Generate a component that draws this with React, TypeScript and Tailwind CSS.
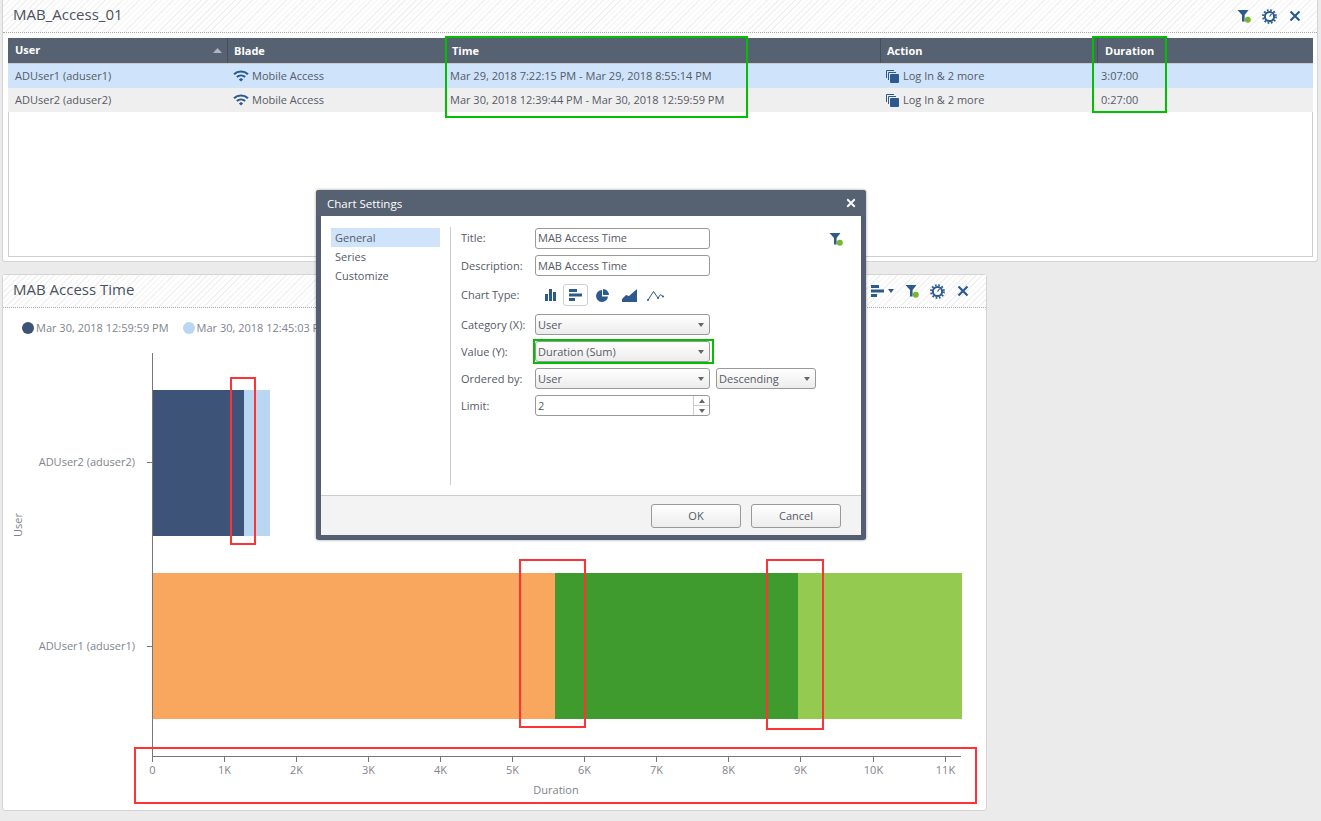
import React from 'react';

const hatch = 'bg-[repeating-linear-gradient(135deg,#f1f1f1_0,#f1f1f1_1px,#ffffff_1px,#ffffff_4px)]';
const blue = '#2c5a8f';

const rows = [
  { user: 'ADUser1 (aduser1)', time: 'Mar 29, 2018 7:22:15 PM - Mar 29, 2018 8:55:14 PM', duration: '3:07:00', bg: 'bg-[#cfe4fb]' },
  { user: 'ADUser2 (aduser2)', time: 'Mar 30, 2018 12:39:44 PM - Mar 30, 2018 12:59:59 PM', duration: '0:27:00', bg: 'bg-[#efefef]' },
];

const ticks = ['0', '1K', '2K', '3K', '4K', '5K', '6K', '7K', '8K', '9K', '10K', '11K'];
const tickX = [152, 224, 296, 368, 440, 512, 584, 656, 728, 800, 873, 945];

const FilterIcon = () => (
  <svg width="15" height="15" viewBox="0 0 15 15" className="block">
    <path d="M0.5 1h11L7.6 6v6.5H5V6z" fill={blue} />
    <circle cx="10.8" cy="10.8" r="3" fill="#76b82a" />
  </svg>
);

const GearIcon = () => (
  <svg width="15" height="15" viewBox="0 0 15 15" className="-ml-px mr-px block">
    <circle cx="7.5" cy="7.5" r="4.6" fill="none" stroke={blue} strokeWidth="2" />
    <circle cx="7.5" cy="7.5" r="6.4" fill="none" stroke={blue} strokeWidth="2" strokeDasharray="1.7 1.65" />
    <path d="M7.5 7.5L9.6 4.8" stroke={blue} strokeWidth="1.2" />
  </svg>
);

const CloseIcon = ({ color = blue, size = 12 }: { color?: string; size?: number }) => (
  <svg width={size} height={size} viewBox="0 0 12 12" className="block">
    <path d="M1.5 1.5l9 9M10.5 1.5l-9 9" stroke={color} strokeWidth="2.2" />
  </svg>
);

const WifiIcon = () => (
  <svg width="16" height="12" viewBox="0 0 16 12" className="block">
    <path d="M1 4.2C5 .6 11 .6 15 4.2" fill="none" stroke={blue} strokeWidth="2.2" />
    <path d="M3.8 7C6.2 4.9 9.8 4.9 12.2 7" fill="none" stroke={blue} strokeWidth="2" />
    <path d="M5.8 9.4L8 8l2.2 1.4L8 11.6z" fill={blue} />
  </svg>
);

const CopyIcon = () => (
  <svg width="13" height="13" viewBox="0 0 13 13" className="block">
    <path d="M.5 8V.5H8M2.5 10V2.5H10" fill="none" stroke={blue} strokeWidth="1" />
    <rect x="4" y="4" width="9" height="9" rx="1" fill={blue} />
  </svg>
);

const HBarsIcon = () => (
  <svg width="13" height="12" viewBox="0 0 13 12" className="block">
    <path d="M0 0h8v3H0zM0 4.5h13v3H0zM0 9h6v3H0z" fill={blue} />
  </svg>
);

const Caret = ({ color = '#666666' }: { color?: string }) => (
  <svg width="6" height="4" viewBox="0 0 6 4" className="block">
    <path d="M0 0h6L3 4z" fill={color} />
  </svg>
);

const Select = ({ value, className }: { value: string; className: string }) => (
  <div className={`flex h-[21px] items-center justify-between rounded-[3px] border border-[#999999] bg-gradient-to-b from-[#ffffff] to-[#ececec] pl-[2px] pr-[5px] ${className}`}>
    <span className="pt-px">{value}</span>
    <Caret />
  </div>
);

const Input = ({ value, nudge = '' }: { value: string; nudge?: string }) => (
  <div className={`flex h-[21px] w-[175px] items-center rounded-[3px] border border-[#999999] bg-white pl-[2px] ${nudge}`}>{value}</div>
);

const FormRow = ({ label, children, mt, nudge = 'pt-px' }: { label: string; children: React.ReactNode; mt: string; nudge?: string }) => (
  <div className={`flex items-center ${mt}`}>
    <span className={`w-[74px] ${nudge}`}>{label}</span>
    {children}
  </div>
);

const HeaderCell = ({ label, sep = true, sort = false, pad = 'pl-[6px] pt-px' }: { label: string; sep?: boolean; sort?: boolean; pad?: string }) => (
  <div className={`flex h-[25px] items-center justify-between pr-[5px] font-bold text-white ${pad} ${sep ? 'border-r border-[#444f5e]' : ''}`}>
    <span>{label}</span>
    {sort && (
      <svg width="9" height="5" viewBox="0 0 9 5" className="block">
        <path d="M0 5L4.5 0 9 5z" fill="#aeb5bf" />
      </svg>
    )}
  </div>
);

const Box = ({ className }: { className: string }) => (
  <div className={`pointer-events-none absolute border-2 ${className}`} />
);

export default function App() {
  return (
    <div className="relative h-[821px] w-[1321px] overflow-hidden bg-[#ebebeb] font-['Open_Sans',sans-serif] text-[11px] text-[#555a66]">
      {/* Table panel */}
      <div className="ml-[2px] mr-[3px] h-[262px] rounded-b-[3px] border border-t-0 border-[#d4d4d4] bg-white">
        <div className={`flex h-[33px] items-center justify-between border-b border-dotted border-[#aaaaaa] pl-[10px] pr-[16px] ${hatch}`}>
          <span className="-mt-[4px] text-[15px] text-[#4a5260]">MAB_Access_01</span>
          <div className="flex items-center gap-[11px]">
            <FilterIcon />
            <GearIcon />
            <CloseIcon />
          </div>
        </div>
        <div className="ml-[5px] mr-[4px] mt-[5px] h-[219px] border border-t-0 border-[#cfcfcf]">
          <div className="-mx-px grid grid-cols-[220px_218px_435px_217px_1fr] border-b border-[#cccccc] bg-[#566171]">
            <HeaderCell label="User" sort pad="pl-[7px]" />
            <HeaderCell label="Blade" />
            <HeaderCell label="Time" />
            <HeaderCell label="Action" />
            <HeaderCell label="Duration" sep={false} pad="pl-[7px] pt-px" />
          </div>
          {rows.map((r) => (
            <div key={r.user} className={`-mx-px grid h-[24px] grid-cols-[220px_218px_435px_217px_1fr] items-center ${r.bg}`}>
              <span className="pl-[7px]">{r.user}</span>
              <span className="flex items-center gap-[3px] pl-[5px]"><WifiIcon />Mobile Access</span>
              <span className="pl-[4px]">{r.time}</span>
              <span className="flex items-center gap-[4px] pl-[5px]"><CopyIcon />Log In &amp; 2 more</span>
              <span className="pl-[3px]">{r.duration}</span>
            </div>
          ))}
        </div>
      </div>

      {/* Chart panel */}
      <div className="ml-[2px] mt-[12px] h-[537px] w-[985px] rounded-[3px] border border-[#d4d4d4] bg-white">
        <div className={`flex h-[33px] items-center justify-between border-b border-dotted border-[#aaaaaa] pl-[10px] pr-[17px] ${hatch}`}>
          <span className="-mt-[4px] text-[15px] text-[#4a5260]">MAB Access Time</span>
          <div className="flex items-center gap-[11px]">
            <div className="flex items-center gap-[4px]">
              <HBarsIcon />
              <Caret color={blue} />
            </div>
            <FilterIcon />
            <GearIcon />
            <CloseIcon />
          </div>
        </div>
        <div className="flex h-[45px] items-start gap-[14px] pl-[19px] pt-[12px] text-[#80848e]">
          <span className="flex items-center gap-[2px]"><span className="h-[12px] w-[12px] rounded-full bg-[#3d5478]" />Mar 30, 2018 12:59:59 PM</span>
          <span className="flex items-center gap-[2px]"><span className="h-[12px] w-[12px] rounded-full bg-[#b9d6f2]" />Mar 30, 2018 12:45:03 PM</span>
        </div>
        <svg width="983" height="458" viewBox="3 353 983 458" className="block font-['Open_Sans',sans-serif]">
          <rect x="153" y="390" width="91" height="146" fill="#3d5478" />
          <rect x="244" y="390" width="26" height="146" fill="#b9d6f2" />
          <rect x="153" y="573" width="402" height="146" fill="#f9a65e" />
          <rect x="555" y="573" width="243" height="146" fill="#3f9b2e" />
          <rect x="798" y="573" width="164" height="146" fill="#94ca50" />
          <path d="M152.5 353V756.5H961" fill="none" stroke="#777777" />
          <path d="M147 462.5h5M147 646.5h5" stroke="#777777" />
          {tickX.map((x, i) => (
            <g key={ticks[i]}>
              <path d={`M${x + 0.5} 756v6`} stroke="#777777" />
              <text x={x + 0.5} y="774" textAnchor="middle" fontSize="11" fill="#80848e">{ticks[i]}</text>
            </g>
          ))}
          <text x="556" y="794" textAnchor="middle" fontSize="11" fill="#80848e">Duration</text>
          <text x="135" y="466" textAnchor="end" fontSize="11" fill="#80848e">ADUser2 (aduser2)</text>
          <text x="135" y="650" textAnchor="end" fontSize="11" fill="#80848e">ADUser1 (aduser1)</text>
          <text x="22" y="525" textAnchor="middle" fontSize="11" fill="#80848e" transform="rotate(-90 22 525)">User</text>
        </svg>
      </div>

      {/* Chart Settings dialog */}
      <div className="absolute left-[316px] top-[190px] flex h-[350px] w-[550px] flex-col rounded-[3px] border-x-[5px] border-b-[5px] border-[#535f70] bg-white shadow-[0_0_3px_rgba(0,0,0,0.4)]">
        <div className="-mx-[5px] flex h-[26px] items-center justify-between rounded-t-[3px] bg-[#566171] pl-[11px] pr-[10px] text-white">
          <span className="mt-px text-[11.5px]">Chart Settings</span>
          <CloseIcon color="#ffffff" size={10} />
        </div>
        <div className="flex flex-1 pl-[10px] pt-[11px]">
          <div className="mt-px w-[109px]">
            <div className="flex h-[19px] items-center bg-[#cfe4fb] pl-[4px] pt-px">General</div>
            <div className="flex h-[19px] items-center pl-[4px] pt-px">Series</div>
            <div className="flex h-[19px] items-center pl-[4px] pt-px">Customize</div>
          </div>
          <div className="ml-[10px] h-[258px] border-l border-[#cccccc]" />
          <div className="relative ml-[10px] flex-1 pt-px">
            <FormRow label="Title:" mt="mt-0" nudge=""><Input value="MAB Access Time" /></FormRow>
            <FormRow label="Description:" mt="mt-[6px]"><Input value="MAB Access Time" nudge="pt-px" /></FormRow>
            <FormRow label="Chart Type:" mt="mt-[8px]">
              <div className="flex items-center">
                <div className="flex h-[21px] w-[28px] items-center justify-center pl-[2px]">
                  <svg width="11" height="12" viewBox="0 0 11 12" className="block"><path d="M0 5h3v7H0zM4 0h3v12H4zM8 3h3v9H8z" fill={blue} /></svg>
                </div>
                <div className="flex h-[22px] w-[25px] items-center justify-center rounded-[3px] border border-[#c8d0da]"><HBarsIcon /></div>
                <div className="flex h-[21px] w-[28px] items-center justify-center">
                  <svg width="13" height="13" viewBox="0 0 13 13" className="block"><path d="M6 1a6 6 0 1 0 6 6.5H6zM7 0v6h6a6 6 0 0 0-6-6z" fill={blue} /></svg>
                </div>
                <div className="flex h-[21px] w-[26px] items-center justify-center">
                  <svg width="15" height="13" viewBox="0 0 15 13" className="block"><path d="M0 13V10l4-4 3 1 8-7v13z" fill={blue} /></svg>
                </div>
                <div className="flex h-[21px] w-[26px] items-center justify-center">
                  <svg width="17" height="11" viewBox="0 0 17 11" className="block">
                    <path d="M1 10L6.5 1.5 11 8l2.5-3.5L16 6.5" fill="none" stroke={blue} strokeWidth="1" />
                    <circle cx="1" cy="10" r="1" fill={blue} />
                    <circle cx="11" cy="8" r="1" fill={blue} />
                    <circle cx="16" cy="6.5" r="1" fill={blue} />
                  </svg>
                </div>
              </div>
            </FormRow>
            <FormRow label="Category (X):" mt="mt-[8px]"><Select value="User" className="w-[175px]" /></FormRow>
            <FormRow label="Value (Y):" mt="mt-[6px]"><Select value="Duration (Sum)" className="w-[175px]" /></FormRow>
            <FormRow label="Ordered by:" mt="mt-[6px]">
              <Select value="User" className="w-[175px]" />
              <Select value="Descending" className="ml-[6px] w-[100px]" />
            </FormRow>
            <FormRow label="Limit:" mt="mt-[6px]">
              <div className="flex h-[21px] w-[175px] items-stretch rounded-[3px] border border-[#999999] bg-white pl-[2px]">
                <span className="flex-1 self-center pt-px">2</span>
                <div className="flex w-[16px] flex-col border-l border-[#cccccc]">
                  <div className="flex flex-1 items-center justify-center border-b border-[#cccccc]">
                    <svg width="6" height="4" viewBox="0 0 6 4" className="block"><path d="M0 4h6L3 0z" fill="#666666" /></svg>
                  </div>
                  <div className="flex flex-1 items-center justify-center"><Caret /></div>
                </div>
              </div>
            </FormRow>
            <div className="absolute right-[17px] top-[5px]"><FilterIcon /></div>
          </div>
        </div>
        <div className="flex h-[40px] items-center justify-end gap-[10px] border-t border-[#cccccc] bg-[#f3f3f3] pr-[20px]">
          <div className="flex h-[24px] w-[90px] items-center justify-center rounded-[3px] border border-[#999999] bg-gradient-to-b from-[#ffffff] to-[#ececec] pt-px">OK</div>
          <div className="flex h-[24px] w-[90px] items-center justify-center rounded-[3px] border border-[#999999] bg-gradient-to-b from-[#ffffff] to-[#ececec] pt-px">Cancel</div>
        </div>
      </div>

      {/* Green and red annotations drawn over the screenshot */}
      <Box className="left-[445px] top-[36px] h-[82px] w-[303px] border-[#00c000]" />
      <Box className="left-[1092px] top-[36px] h-[77px] w-[75px] border-[#00c000]" />
      <Box className="left-[533px] top-[339px] h-[25px] w-[181px] border-[#00c000]" />
      <Box className="left-[230px] top-[377px] h-[168px] w-[26px] border-[#ff3333]" />
      <Box className="left-[519px] top-[559px] h-[169px] w-[67px] border-[#ff3333]" />
      <Box className="left-[766px] top-[559px] h-[171px] w-[58px] border-[#ff3333]" />
      <Box className="left-[134px] top-[747px] h-[57px] w-[843px] border-[#ff3333]" />
    </div>
  );
}
